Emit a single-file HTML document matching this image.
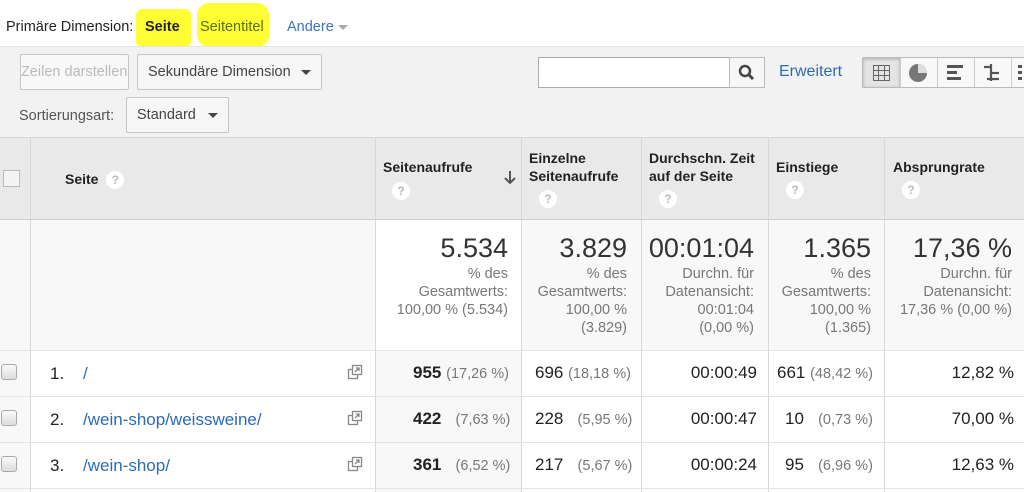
<!DOCTYPE html>
<html><head><meta charset="utf-8">
<style>
*{box-sizing:border-box;margin:0;padding:0}
html,body{width:1024px;height:492px;overflow:hidden}
body{background:#fff;font-family:"Liberation Sans",Arial,sans-serif;color:#222;position:relative}
.a{position:absolute}
.hl{background:#ffff33;border-radius:6px}
.btn{position:absolute;border:1px solid #c6c6c6;border-radius:2px;background:#f8f8f8;font-size:14.5px;color:#444}
.caret{display:inline-block;width:0;height:0;border-left:5px solid transparent;border-right:5px solid transparent;border-top:5px solid #444;vertical-align:middle}
.col{position:absolute;top:137px;height:355px;border-left:1px solid #d8d8d8}
.hd{position:absolute;font-weight:bold;font-size:14px;line-height:18px;color:#222}
.q{display:inline-block;width:18px;height:18px;border-radius:50%;background:#fff;color:#bbb;font-size:12px;font-weight:bold;text-align:center;line-height:18px}
.big{position:absolute;font-size:27px;color:#333;text-align:right}
.sub{position:absolute;font-size:14.5px;color:#777;text-align:right;line-height:18px}
.row{position:absolute;left:0;width:1024px;height:46px;border-top:1px solid #e4e4e4}
.t{position:absolute;font-size:17px;color:#222;top:13px;white-space:nowrap}
.p{color:#777;font-size:14.5px}
.cb{position:absolute;left:1px;top:13px;width:16px;height:16px;border:1px solid #aaa;border-radius:3px;background:linear-gradient(#fafafa,#ddd)}
</style></head><body>
<div class="a" style="left:6px;top:19px;font-size:14.5px;color:#222">Primäre Dimension:</div>
<div class="a hl" style="left:136px;top:9px;width:55px;height:38px"></div>
<div class="a" style="left:145px;top:19px;font-size:14.5px;font-weight:bold">Seite</div>
<div class="a hl" style="left:197px;top:3px;width:72px;height:44px;border-radius:12px"></div>
<div class="a" style="left:200px;top:19px;font-size:14.5px;color:#5a6f00">Seitentitel</div>
<div class="a" style="left:287px;top:19px;font-size:14.5px;color:#3b73c3">Andere <span class="caret" style="border-top-color:#aaa"></span></div>
<div class="a" style="left:0;top:46px;width:1024px;height:91px;background:#f2f2f2;border-top:1px solid #e4e4e4"></div>
<div class="btn" style="left:20px;top:54px;width:109px;height:36px;color:#bbb;line-height:34px;overflow:hidden;white-space:nowrap">Zeilen darstellen</div>
<div class="btn" style="left:137px;top:54px;width:185px;height:36px;line-height:34px;padding-left:10px;background:#f6f6f6">Sekundäre Dimension <span class="caret" style="margin-left:6px"></span></div>
<div class="a" style="left:19px;top:108px;font-size:14.5px;color:#555">Sortierungsart:</div>
<div class="btn" style="left:126px;top:97px;width:103px;height:36px;line-height:34px;padding-left:10px;background:#f6f6f6">Standard <span class="caret" style="margin-left:8px"></span></div>
<div class="a" style="left:538px;top:57px;width:193px;height:31px;border:1px solid #aaa;background:#fff"></div>
<div class="a" style="left:729px;top:57px;width:36px;height:31px;border:1px solid #bbb;background:#f6f6f6">
<svg width="34" height="29" viewBox="0 0 34 29"><circle cx="15" cy="13" r="5" fill="none" stroke="#444" stroke-width="2.5"/><line x1="19" y1="17" x2="23" y2="21" stroke="#444" stroke-width="3"/></svg></div>
<div class="a" style="left:779px;top:63px;font-size:16px;color:#2a6bb8">Erweitert</div>
<div class="a" style="left:862px;top:57px;width:170px;height:31px;border:1px solid #bbb;border-radius:2px;background:#f8f8f8"></div>
<div class="a" style="left:863px;top:58px;width:37px;height:29px;background:#e4e4e4;box-shadow:inset 0 1px 3px #aaa"></div>
<svg class="a" style="left:863px;top:58px" width="161" height="29">
<g stroke="#666" stroke-width="1" fill="none"><rect x="10.5" y="7.5" width="16" height="15"/><line x1="15.5" y1="7" x2="15.5" y2="23"/><line x1="21.5" y1="7" x2="21.5" y2="23"/><line x1="10" y1="12.5" x2="27" y2="12.5"/><line x1="10" y1="17.5" x2="27" y2="17.5"/></g>
<line x1="37.5" y1="0" x2="37.5" y2="29" stroke="#ccc"/>
<circle cx="55" cy="15" r="9" fill="#777"/><path d="M55 15 L55 6 A9 9 0 0 1 64 15 Z" fill="#ddd"/>
<line x1="74.5" y1="0" x2="74.5" y2="29" stroke="#ccc"/>
<rect x="84" y="7" width="16" height="3" fill="#555"/><rect x="84" y="13" width="10" height="3" fill="#555"/><rect x="84" y="19" width="14" height="3" fill="#555"/>
<line x1="111.5" y1="0" x2="111.5" y2="29" stroke="#ccc"/>
<path d="M121 9 H128 M128 6 V23 M128 15 H136 M124 21 H136" stroke="#555" stroke-width="2.2" fill="none"/>
<line x1="148.5" y1="0" x2="148.5" y2="29" stroke="#ccc"/>
<rect x="155" y="7" width="4" height="3" fill="#555"/><rect x="155" y="13" width="4" height="3" fill="#555"/><rect x="155" y="19" width="4" height="3" fill="#555"/>
</svg>
<div class="a" style="left:0;top:137px;width:1024px;height:83px;background:#e9e9e9;border-top:1px solid #d8d8d8;border-bottom:1px solid #d0d0d0"></div>
<div class="a" style="left:0;top:220px;width:1024px;height:130px;background:#f8f8f8"></div>
<div class="a" style="left:375px;top:220px;width:146px;height:130px;background:#fff"></div>
<div class="a" style="left:0;top:350px;width:30px;height:142px;background:#f8f8f8"></div>
<div class="a" style="left:375px;top:350px;width:146px;height:142px;background:#f8f8f8"></div>
<div class="col" style="left:30px"></div><div class="col" style="left:375px"></div><div class="col" style="left:521px"></div><div class="col" style="left:641px"></div><div class="col" style="left:768px"></div><div class="col" style="left:884px"></div>
<div class="a" style="left:3px;top:170px;width:17px;height:17px;border:1px solid #bbb;background:#f4f4f4"></div>
<div class="hd" style="left:65px;top:170px">Seite &nbsp;<span class="q">?</span></div>
<div class="hd" style="left:383px;top:158px">Seitenaufrufe</div><div class="a" style="left:392px;top:182px"><span class="q">?</span></div>
<svg class="a" style="left:503px;top:170px" width="14" height="16"><path d="M7 1 V13 M2 8 L7 13 L12 8" stroke="#555" stroke-width="2" fill="none"/></svg>
<div class="hd" style="left:529px;top:149px">Einzelne<br>Seitenaufrufe</div><div class="a" style="left:539px;top:190px"><span class="q">?</span></div>
<div class="hd" style="left:649px;top:149px">Durchschn. Zeit<br>auf der Seite</div><div class="a" style="left:659px;top:190px"><span class="q">?</span></div>
<div class="hd" style="left:776px;top:158px">Einstiege</div><div class="a" style="left:786px;top:181px"><span class="q">?</span></div>
<div class="hd" style="left:893px;top:158px">Absprungrate</div><div class="a" style="left:902px;top:181px"><span class="q">?</span></div>
<div class="big" style="right:516px;top:233px">5.534</div>
<div class="sub" style="right:516px;top:265px">% des<br>Gesamtwerts:<br>100,00 % (5.534)</div>
<div class="big" style="right:397px;top:233px">3.829</div>
<div class="sub" style="right:397px;top:265px">% des<br>Gesamtwerts:<br>100,00 %<br>(3.829)</div>
<div class="big" style="right:270px;top:233px">00:01:04</div>
<div class="sub" style="right:270px;top:265px">Durchn. für<br>Datenansicht:<br>00:01:04<br>(0,00 %)</div>
<div class="big" style="right:153px;top:233px">1.365</div>
<div class="sub" style="right:153px;top:265px">% des<br>Gesamtwerts:<br>100,00 %<br>(1.365)</div>
<div class="big" style="right:12px;top:233px">17,36 %</div>
<div class="sub" style="right:12px;top:265px">Durchn. für<br>Datenansicht:<br>17,36 % (0,00 %)</div>
<div class="row" style="top:350px"><div class="cb"></div><div class="t" style="left:50px">1.</div><div class="t" style="left:83px;color:#2a6bb8">/</div></div>
<div class="row" style="top:396px"><div class="cb"></div><div class="t" style="left:50px">2.</div><div class="t" style="left:83px;color:#2a6bb8">/wein-shop/weissweine/</div></div>
<div class="row" style="top:442px"><div class="cb"></div><div class="t" style="left:50px">3.</div><div class="t" style="left:83px;color:#2a6bb8">/wein-shop/</div></div>
<div class="a" style="left:0;top:488px;width:1024px;height:1px;background:#e4e4e4"></div>
<svg class="a" style="left:347px;top:364px" width="16" height="110"><g fill="none" stroke="#888" stroke-width="1.3">
<rect x="1.5" y="5.5" width="9" height="9"/><rect x="5.5" y="1.5" width="9" height="9" fill="#fff"/><path d="M8 8 L12 4 M9 4 H12 V7"/>
<g transform="translate(0,46)"><rect x="1.5" y="5.5" width="9" height="9"/><rect x="5.5" y="1.5" width="9" height="9" fill="#fff"/><path d="M8 8 L12 4 M9 4 H12 V7"/></g>
<g transform="translate(0,92)"><rect x="1.5" y="5.5" width="9" height="9"/><rect x="5.5" y="1.5" width="9" height="9" fill="#fff"/><path d="M8 8 L12 4 M9 4 H12 V7"/></g></g></svg>
<div class="t" style="left:413px;top:363px"><b>955</b> <span class="p">(17,26 %)</span></div>
<div class="t" style="left:413px;top:409px"><b>422</b> &nbsp;&nbsp;<span class="p">(7,63 %)</span></div>
<div class="t" style="left:413px;top:455px"><b>361</b> &nbsp;&nbsp;<span class="p">(6,52 %)</span></div>
<div class="t" style="left:535px;top:363px">696 <span class="p">(18,18 %)</span></div>
<div class="t" style="left:535px;top:409px">228 &nbsp;&nbsp;<span class="p">(5,95 %)</span></div>
<div class="t" style="left:535px;top:455px">217 &nbsp;&nbsp;<span class="p">(5,67 %)</span></div>
<div class="t" style="right:267px;top:363px">00:00:49</div>
<div class="t" style="right:267px;top:409px">00:00:47</div>
<div class="t" style="right:267px;top:455px">00:00:24</div>
<div class="t" style="left:777px;top:363px">661 <span class="p">(48,42 %)</span></div>
<div class="t" style="left:785px;top:409px">10 &nbsp;&nbsp;<span class="p">(0,73 %)</span></div>
<div class="t" style="left:785px;top:455px">95 &nbsp;&nbsp;<span class="p">(6,96 %)</span></div>
<div class="t" style="right:10px;top:363px">12,82 %</div>
<div class="t" style="right:10px;top:409px">70,00 %</div>
<div class="t" style="right:10px;top:455px">12,63 %</div>
</body></html>
